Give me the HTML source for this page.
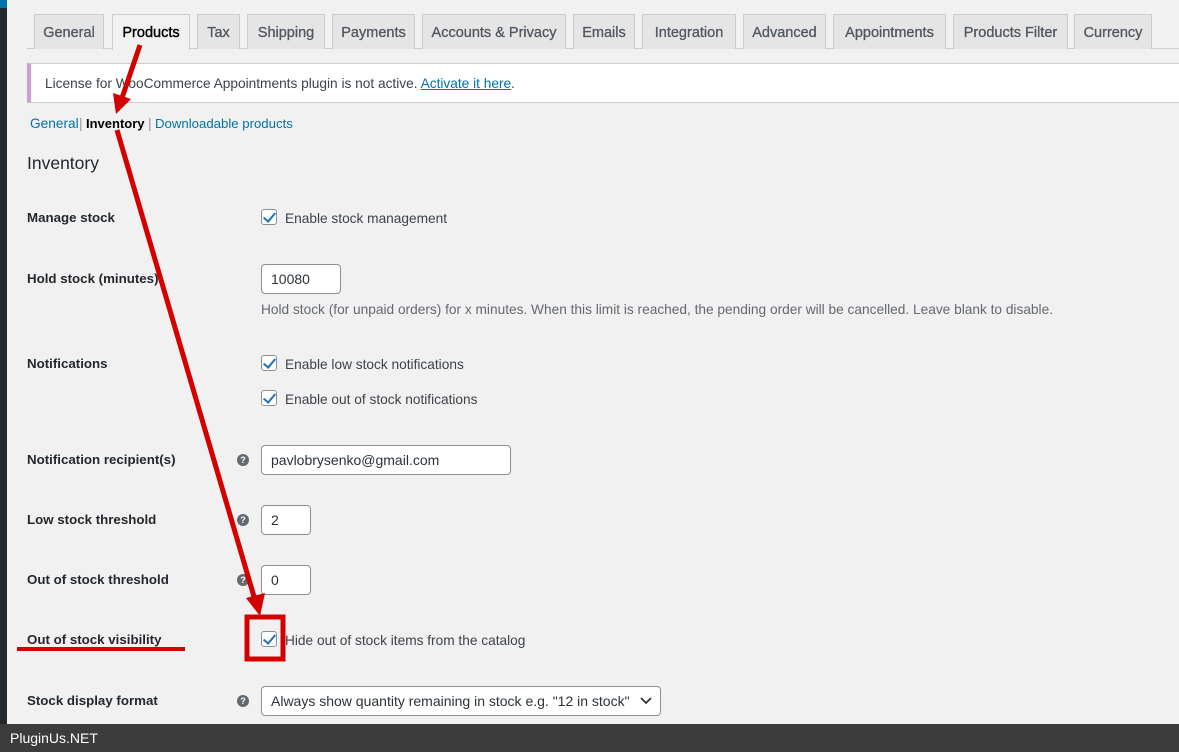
<!DOCTYPE html>
<html><head><style>
*{box-sizing:border-box;margin:0;padding:0}
body{width:1179px;height:752px;overflow:hidden;background:#f1f1f1;font-family:"Liberation Sans",sans-serif;font-size:13.7px;color:#23282d;position:relative}
.a{position:absolute}
.tab{position:absolute;top:14px;height:35px;border:1px solid #ccc;border-bottom:none;background:#e5e5e5;color:#50575e;font-size:14.5px;text-align:center;line-height:36px;-webkit-text-stroke:0.3px #50575e}
.tab.on{background:#f1f1f1;color:#000;height:36px;-webkit-text-stroke:0.4px #000}
.lbl{position:absolute;left:27px;font-weight:bold;font-size:13.3px;color:#23282d}
.cb{position:absolute;width:16px;height:16px;border:1px solid #8c8f94;border-radius:3px;background:#fff}
.cb:after{content:"";position:absolute;left:4px;top:0px;width:5px;height:10px;border:solid #2271b1;border-width:0 2px 2px 0;transform:rotate(40deg)}
.txt{position:absolute;font-size:13.7px;color:#3c434a}
.in{position:absolute;height:30px;border:1px solid #8c8f94;border-radius:4px;background:#fff;font-size:14px;line-height:28px;padding-left:9px;color:#2c3338}
.q{position:absolute;left:237px;width:12px;height:12px;border-radius:50%;background:#646970;color:#fff;font-size:9px;font-weight:bold;text-align:center;line-height:12px}
</style></head><body>
<div class="a" style="left:0;top:0;width:7px;height:752px;background:#23282d"></div>
<div class="a" style="left:0;top:0;width:7px;height:8px;background:#0073aa"></div>
<div class="a" style="left:27px;top:48px;width:1152px;height:1px;background:#ccc"></div>
<div class="tab" style="left:34px;width:70px">General</div>
<div class="tab on" style="left:112px;width:78px">Products</div>
<div class="tab" style="left:197px;width:43px">Tax</div>
<div class="tab" style="left:247px;width:78px">Shipping</div>
<div class="tab" style="left:332px;width:83px">Payments</div>
<div class="tab" style="left:422px;width:144px">Accounts &amp; Privacy</div>
<div class="tab" style="left:573px;width:62px">Emails</div>
<div class="tab" style="left:642px;width:94px">Integration</div>
<div class="tab" style="left:743px;width:83px">Advanced</div>
<div class="tab" style="left:833px;width:113px">Appointments</div>
<div class="tab" style="left:953px;width:115px">Products Filter</div>
<div class="tab" style="left:1074px;width:78px">Currency</div>
<div class="a" style="left:27px;top:63px;width:1152px;height:40px;background:#fff;border:1px solid #ccc;border-left:4px solid #c9a0d0;border-right:none"></div>
<div class="txt" style="left:45px;top:76px;color:#3c434a">License for WooCommerce Appointments plugin is not active. <span style="color:#0073aa;text-decoration:underline">Activate it here</span>.</div>
<div class="txt" style="left:30px;top:116px;color:#0073aa">General</div>
<div class="txt" style="left:79px;top:116px;color:#999">|</div>
<div class="txt" style="left:86px;top:116px;color:#000;font-weight:bold;font-size:13px">Inventory</div>
<div class="txt" style="left:148px;top:116px;color:#999">|</div>
<div class="txt" style="left:155px;top:116px;color:#0073aa;font-size:13.2px">Downloadable products</div>
<div class="a" style="left:27px;top:153px;font-size:17.5px;color:#23282d">Inventory</div>
<div class="lbl" style="top:210px">Manage stock</div>
<div class="cb" style="left:261px;top:209px"></div><div class="txt" style="left:285px;top:211px">Enable stock management</div>
<div class="lbl" style="top:271px">Hold stock (minutes)</div>
<div class="in" style="left:261px;top:264px;width:80px">10080</div>
<div class="txt" style="left:261px;top:302px;color:#646970">Hold stock (for unpaid orders) for x minutes. When this limit is reached, the pending order will be cancelled. Leave blank to disable.</div>
<div class="lbl" style="top:356px">Notifications</div>
<div class="cb" style="left:261px;top:355px"></div><div class="txt" style="left:285px;top:357px">Enable low stock notifications</div>
<div class="cb" style="left:261px;top:390px"></div><div class="txt" style="left:285px;top:392px">Enable out of stock notifications</div>
<div class="lbl" style="top:452px">Notification recipient(s)</div><div class="q" style="top:454px">?</div>
<div class="in" style="left:261px;top:445px;width:250px">pavlobrysenko@gmail.com</div>
<div class="lbl" style="top:512px">Low stock threshold</div><div class="q" style="top:514px">?</div>
<div class="in" style="left:261px;top:505px;width:50px">2</div>
<div class="lbl" style="top:572px">Out of stock threshold</div><div class="q" style="top:574px">?</div>
<div class="in" style="left:261px;top:565px;width:50px">0</div>
<div class="lbl" style="top:632px">Out of stock visibility</div>
<div class="cb" style="left:261px;top:631px"></div><div class="txt" style="left:285px;top:633px">Hide out of stock items from the catalog</div>
<div class="lbl" style="top:693px">Stock display format</div><div class="q" style="top:695px">?</div>
<div class="in" style="left:261px;top:686px;width:400px">Always show quantity remaining in stock e.g. "12 in stock"<svg style="position:absolute;right:8px;top:10px" width="12" height="8"><path d="M1 1l5 5 5-5" fill="none" stroke="#333" stroke-width="1.8"/></svg></div>
<svg class="a" style="left:0;top:0" width="1179" height="752">
<line x1="140" y1="45" x2="122" y2="98" stroke="#d40000" stroke-width="5"/>
<polygon points="113,93 131,99 116,114" fill="#d40000"/>
<line x1="117" y1="130" x2="255" y2="600" stroke="#d40000" stroke-width="5"/>
<polygon points="246,598 265,593 260,616" fill="#d40000"/>
<rect x="247" y="617" width="36" height="42" fill="none" stroke="#d40000" stroke-width="5"/>
<line x1="17" y1="649" x2="185" y2="649" stroke="#d40000" stroke-width="4"/>
</svg>
<div class="a" style="left:0;top:724px;width:1179px;height:28px;background:#3c3c3c;color:#fff;font-size:14px;line-height:28px;padding-left:10px">PluginUs.NET</div>
</body></html>
